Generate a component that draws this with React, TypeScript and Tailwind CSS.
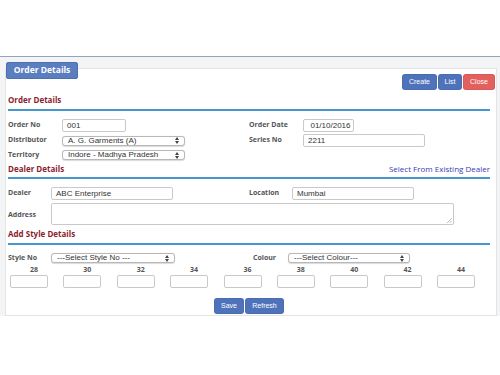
import React from "react";

const lbl = "text-[7px] font-bold text-[#555] shrink-0";
const inp =
  "h-[13px] border border-[#c9c9c9] rounded-[2px] bg-white font-['Liberation_Sans',sans-serif] text-[8px] text-[#333] pl-[4px] flex items-center shrink-0";
const head = "h-[12px] leading-[12px] text-[8px] font-bold text-[#8b1d2f]";
const btn =
  "h-[14px] rounded-[2px] bg-[#4f73ba] text-white font-['Liberation_Sans',sans-serif] text-[7px] flex items-center justify-center shadow-[0_0_0_1px_#4a6db0]";

function Arrows() {
  return (
    <svg width="4" height="7" viewBox="0 0 4 7" className="shrink-0">
      <path d="M0 3 L2 0 L4 3 Z" fill="#444" />
      <path d="M0 4 L2 7 L4 4 Z" fill="#444" />
    </svg>
  );
}

function Sel({ w, text }: { w: string; text: string }) {
  return (
    <div
      className={`${w} h-[10px] border border-[#b8b8b8] rounded-[3px] bg-white shadow-[0_0.5px_1px_rgba(0,0,0,0.15)] flex items-center justify-between pl-[5px] pr-[5px] font-['Liberation_Sans',sans-serif] text-[8px] text-[#333] shrink-0`}
    >
      <span className="leading-none">{text}</span>
      <Arrows />
    </div>
  );
}

const sizes = ["28", "30", "32", "34", "36", "38", "40", "42", "44"];

export default function App() {
  return (
    <div className="w-[500px] h-[375px] bg-white font-['Open_Sans',sans-serif] pt-[56px] overflow-hidden">
      <div className="border-t border-[#93a6b8] bg-[#f3f4f5] pl-[5px] pr-[3px]">
        <div className="pt-[5px] pl-[1px] relative z-10 flex">
          <div className="flex h-[17px] w-[72px] items-center justify-center rounded-[2px] bg-[#5b7ec1] border border-[#4f70b0] text-[8.5px] leading-none font-bold text-white">
            Order Details
          </div>
        </div>
        <div className="-mt-[11px] bg-white border border-[#e4e4e4] px-[2px] pb-[2px]">
          {/* top buttons */}
          <div className="mt-[6px] flex justify-end gap-[3px]">
            <div className={`${btn} w-[33px]`}>Create</div>
            <div className={`${btn} w-[22px]`}>List</div>
            <div className={`${btn} w-[30px] bg-[#e2605d] shadow-[0_0_0_1px_#d85855]`}>Close</div>
          </div>

          {/* Order Details */}
          <div className="mt-[5px] mr-[4px] pb-[3px] border-b-2 border-[#4597cc]">
            <div className={head}>Order Details</div>
          </div>

          <div className="flex mt-[8px] h-[13px] items-center">
            <div className="flex items-center w-[241px]">
              <div className={`${lbl} w-[54px]`}>Order No</div>
              <div className={`${inp} w-[64px]`}>001</div>
            </div>
            <div className="flex items-center">
              <div className={`${lbl} w-[54px]`}>Order Date</div>
              <div className={`${inp} w-[51px] justify-center pl-0`}>01/10/2016</div>
            </div>
          </div>
          <div className="flex mt-[2px] h-[13px] items-center">
            <div className="flex items-center w-[241px]">
              <div className={`${lbl} w-[54px]`}>Distributor</div>
              <Sel w="w-[123px]" text="A. G. Garments (A)" />
            </div>
            <div className="flex items-center">
              <div className={`${lbl} w-[54px]`}>Series No</div>
              <div className={`${inp} w-[122px]`}>2211</div>
            </div>
          </div>
          <div className="flex mt-[3px] h-[10px] items-center">
            <div className={`${lbl} w-[54px]`}>Territory</div>
            <Sel w="w-[123px]" text="Indore - Madhya Pradesh" />
          </div>

          {/* Dealer Details */}
          <div className="mt-[3px] mr-[4px] pb-[2px] border-b-2 border-[#4597cc] flex justify-between items-center">
            <div className={head}>Dealer Details</div>
            <div className="text-[8px] text-[#3b3bb0] leading-[12px]">Select From Existing Dealer</div>
          </div>

          <div className="flex mt-[8px] h-[13px] items-center">
            <div className="flex items-center w-[241px]">
              <div className={`${lbl} w-[43px]`}>Dealer</div>
              <div className={`${inp} w-[122px]`}>ABC Enterprise</div>
            </div>
            <div className="flex items-center">
              <div className={`${lbl} w-[43px]`}>Location</div>
              <div className={`${inp} w-[122px]`}>Mumbai</div>
            </div>
          </div>
          <div className="flex mt-[3px] h-[22px] items-center">
            <div className={`${lbl} w-[43px] mt-[2px]`}>Address</div>
            <div className="relative w-[403px] h-[22px] border border-[#c9c9c9] rounded-[2px] bg-white">
              <svg width="5" height="5" viewBox="0 0 5 5" className="absolute right-[1px] bottom-[1px]">
                <path d="M5 0 L0 5 M5 2.5 L2.5 5" stroke="#999" strokeWidth="0.6" />
              </svg>
            </div>
          </div>

          {/* Add Style Details */}
          <div className="mt-[3px] mr-[4px] pb-[3px] border-b-2 border-[#4597cc]">
            <div className={head}>Add Style Details</div>
          </div>

          <div className="flex mt-[8px] h-[10px] items-center">
            <div className="flex items-center w-[245px]">
              <div className={`${lbl} w-[43px]`}>Style No</div>
              <Sel w="w-[124px]" text="---Select Style No ---" />
            </div>
            <div className="flex items-center">
              <div className={`${lbl} w-[35px]`}>Colour</div>
              <Sel w="w-[122px]" text="---Select Colour---" />
            </div>
          </div>

          <div className="ml-[2px] mt-[2px] grid grid-cols-[repeat(9,53.375px)]">
            {sizes.map((s) => (
              <div key={s} className="flex flex-col">
                <div className="w-[48px] h-[9px] leading-[9px] text-center text-[7px] font-bold text-[#555]">{s}</div>
                <div className="mt-[1px] w-[38px] h-[13px] border border-[#c9c9c9] rounded-[2px] bg-white" />
              </div>
            ))}
          </div>

          <div className="mt-[11px] flex justify-center gap-[3px] pr-[4px]">
            <div className={`${btn} w-[28px]`}>Save</div>
            <div className={`${btn} w-[37px]`}>Refresh</div>
          </div>
        </div>
      </div>
    </div>
  );
}
